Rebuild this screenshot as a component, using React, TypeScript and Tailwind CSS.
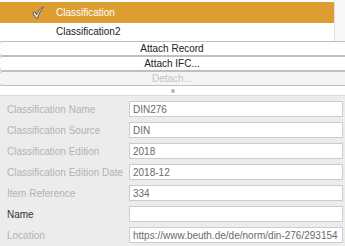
import React from 'react';

const fields = [
  { label: 'Classification Name', value: 'DIN276', enabled: false },
  { label: 'Classification Source', value: 'DIN', enabled: false },
  { label: 'Classification Edition', value: '2018', enabled: false },
  { label: 'Classification Edition Date', value: '2018-12', enabled: false },
  { label: 'Item Reference', value: '334', enabled: false },
  { label: 'Name', value: '', enabled: true },
  { label: 'Location', value: 'https://www.beuth.de/de/norm/din-276/293154', enabled: false },
];

const buttons = [
  { text: 'Attach Record', disabled: false },
  { text: 'Attach IFC...', disabled: false },
  { text: 'Detach...', disabled: true },
];

function Check() {
  return (
    <svg width="12" height="13" viewBox="0 0 12 13" className="block">
      <path
        d="M0.8 7.2 L2.9 5.8 L4.6 8.8 C6.2 5 8.3 2.2 11 0.8 L11.4 1.5 C9 3.6 7 7.2 5.5 12.2 L4.1 12.2 Z"
        fill="#e6e6e6"
        stroke="#4a4a4a"
        strokeWidth="0.9"
        strokeLinejoin="round"
      />
    </svg>
  );
}

export default function App() {
  return (
    <div
      className="w-[345px] h-[246px] overflow-hidden bg-white text-[10px] text-[#222]"
      style={{ fontFamily: '"Liberation Sans", Arial, sans-serif' }}
    >
      {/* Classification list */}
      <div className="flex h-[41px]">
        <div className="flex-1 pt-[2px]">
          <div className="flex items-center h-[21px] bg-[#dd9d31] text-white">
            <div className="w-[56px] flex justify-end pr-[12px]">
              <Check />
            </div>
            <span>Classification</span>
          </div>
          <div className="flex items-center h-[18px] pl-[56px] pb-[1px]">
            <span>Classification2</span>
          </div>
        </div>
        <div className="w-[11px] bg-[#f7f7f7] border-l border-[#e4e4e4]" />
      </div>

      {/* Buttons */}
      <div className="ml-[-1px] w-[352px]">
        {buttons.map(b => (
          <div
            key={b.text}
            className={`h-[15px] flex items-center justify-center border border-[#bfbfbf] rounded-[3px] ${
              b.disabled ? 'bg-[#f4f4f4] text-[#c2c2c2]' : 'bg-white text-[#222]'
            }`}
          >
            <span className="ml-[-6px]">{b.text}</span>
          </div>
        ))}
      </div>

      {/* Splitter */}
      <div className="h-[10px] flex items-center justify-center border-b border-[#d9d9d9]">
        <div className="w-[4px] h-[4px] rounded-full bg-[#b9b9b9]" />
      </div>

      {/* Form */}
      <div className="bg-[#ececec] h-full pt-[5px] flex flex-col gap-[5px]">
        {fields.map(f => (
          <div key={f.label} className="flex items-center h-[16px]">
            <div className={`w-[129px] pl-[7px] whitespace-nowrap ${f.enabled ? 'text-[#333]' : 'text-[#b3b3b3]'}`}>
              {f.label}
            </div>
            <div className="w-[214px] h-[16px] bg-white border border-[#cdcdcd] flex items-center pl-[3px] overflow-hidden whitespace-nowrap text-[#6a6a6a]">
              {f.value}
            </div>
          </div>
        ))}
      </div>
    </div>
  );
}
